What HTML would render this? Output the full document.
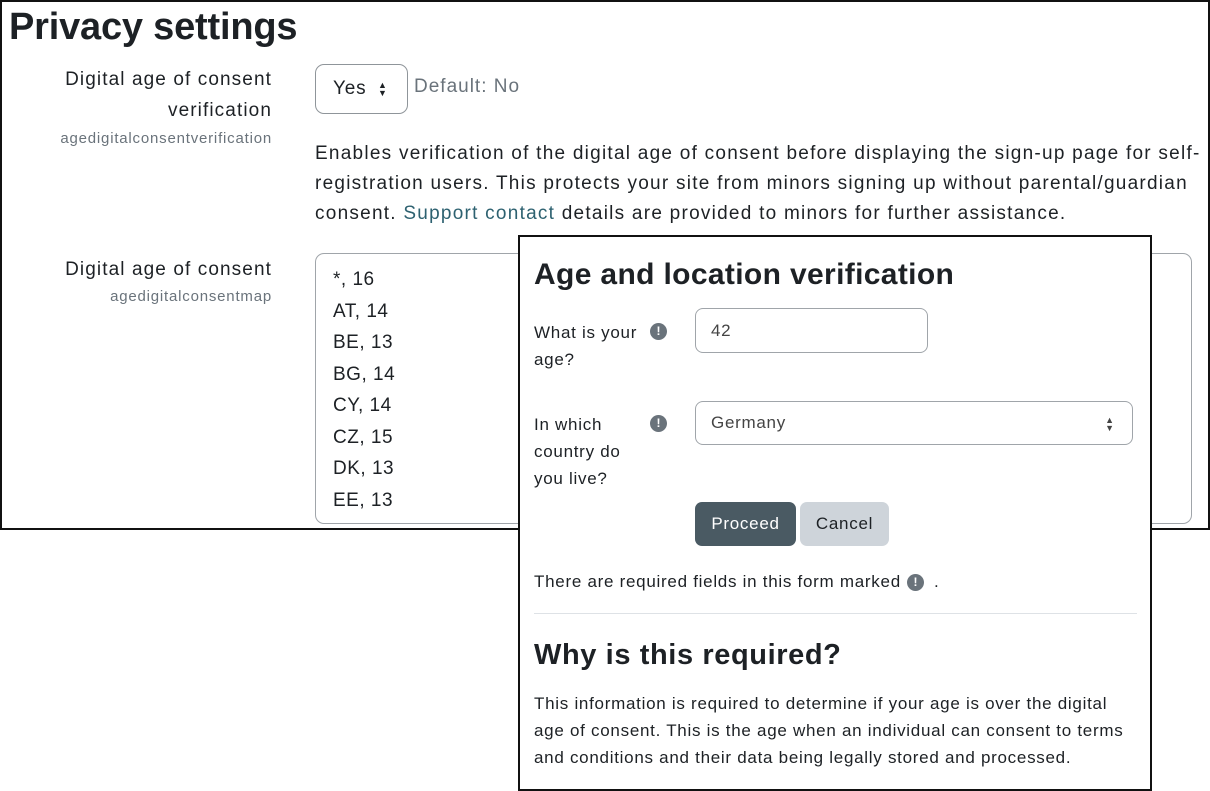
<!DOCTYPE html>
<html><head><style>
*{box-sizing:border-box;margin:0;padding:0}
body{width:1210px;height:791px;background:#fff;position:relative;overflow:hidden;font-family:"Liberation Sans",Arial,sans-serif;color:#1d2125}
.abs{position:absolute}
.outer{left:0;top:0;width:1210px;height:530px;border:2.5px solid #111}
h1{position:absolute;left:9px;top:6px;font-size:38px;font-weight:bold;letter-spacing:-0.2px}
.lbl{position:absolute;right:938px;text-align:right;font-size:19px;line-height:31px;white-space:nowrap;letter-spacing:1.1px}
.sm{position:absolute;right:938px;font-size:15px;color:#6a737b;letter-spacing:0.8px}
.desc{left:315px;top:139px;width:895px;font-size:19px;line-height:30px;white-space:nowrap;letter-spacing:1.25px}
.ta{left:315px;top:253px;width:877px;height:271px;border:1px solid #a0a5aa;border-radius:9px;padding:10px 17px;font-size:19px;line-height:31.5px;letter-spacing:0.5px}
.modal{left:518px;top:235px;width:634px;height:556px;border:2.5px solid #111;background:#fff}
.m{position:absolute;font-size:17px;white-space:nowrap;letter-spacing:0.72px}
.ico{position:absolute;width:17px;height:17px;border-radius:50%;background:#6a737b;color:#fff;font-size:12px;font-weight:bold;text-align:center;line-height:17px}
.arr{position:absolute;font-size:9px;line-height:8px;letter-spacing:0}
</style></head><body>
<div class="abs outer"></div>
<h1>Privacy settings</h1>
<div class="lbl" style="top:64px">Digital age of consent<br>verification</div>
<div class="sm" style="top:130px">agedigitalconsentverification</div>
<div class="abs" style="left:315px;top:64px;width:93px;height:50px;border:1px solid #8f959a;border-radius:9px;font-size:19px;line-height:48px;padding-left:17px;letter-spacing:0.8px">Yes</div>
<div class="arr" style="left:378px;top:81px">&#x25B2;<br>&#x25BC;</div>
<div class="abs" style="left:414px;top:76px;font-size:19px;color:#6a737b;letter-spacing:1px">Default: No</div>
<div class="abs desc">Enables verification of the digital age of consent before displaying the sign-up page for self-<br>registration users. This protects your site from minors signing up without parental/guardian<br>consent. <span style="color:#2d6170">Support contact</span> details are provided to minors for further assistance.</div>
<div class="lbl" style="top:254px">Digital age of consent</div>
<div class="sm" style="top:288px">agedigitalconsentmap</div>
<div class="abs ta">*, 16<br>AT, 14<br>BE, 13<br>BG, 14<br>CY, 14<br>CZ, 15<br>DK, 13<br>EE, 13</div>
<div class="abs modal">
<div class="m" style="left:14px;top:21px;font-size:30px;font-weight:bold;letter-spacing:0.35px">Age and location verification</div>
<div class="m" style="left:14px;top:82px;line-height:27px">What is your<br>age?</div>
<div class="ico" style="left:130px;top:86px">!</div>
<div class="m" style="left:175px;top:71px;width:233px;height:45px;border:1px solid #a0a5aa;border-radius:8px;padding:0 15px;line-height:43px;color:#444">42</div>
<div class="m" style="left:14px;top:174px;line-height:27px">In which<br>country do<br>you live?</div>
<div class="ico" style="left:130px;top:178px">!</div>
<div class="m" style="left:175px;top:164px;width:438px;height:44px;border:1px solid #a0a5aa;border-radius:8px;padding:0 15px;line-height:42px;color:#444">Germany<span class="arr" style="right:18px;top:14px">&#x25B2;<br>&#x25BC;</span></div>
<div class="m" style="left:175px;top:265px;width:101px;height:44px;background:#4a5a63;border-radius:7px;color:#fff;text-align:center;line-height:44px">Proceed</div>
<div class="m" style="left:280px;top:265px;width:89px;height:44px;background:#ced4da;border-radius:7px;color:#1d2125;text-align:center;line-height:44px">Cancel</div>
<div class="m" style="left:14px;top:335px">There are required fields in this form marked</div>
<div class="ico" style="left:387px;top:337px">!</div>
<div class="m" style="left:414px;top:335px">.</div>
<div class="abs" style="left:14px;top:376px;width:603px;height:1px;background:#dee2e6"></div>
<div class="m" style="left:14px;top:402px;font-size:29px;font-weight:bold;letter-spacing:0.6px">Why is this required?</div>
<div class="m" style="left:14px;top:453px;line-height:27px">This information is required to determine if your age is over the digital<br>age of consent. This is the age when an individual can consent to terms<br>and conditions and their data being legally stored and processed.</div>
</div>
</body></html>
